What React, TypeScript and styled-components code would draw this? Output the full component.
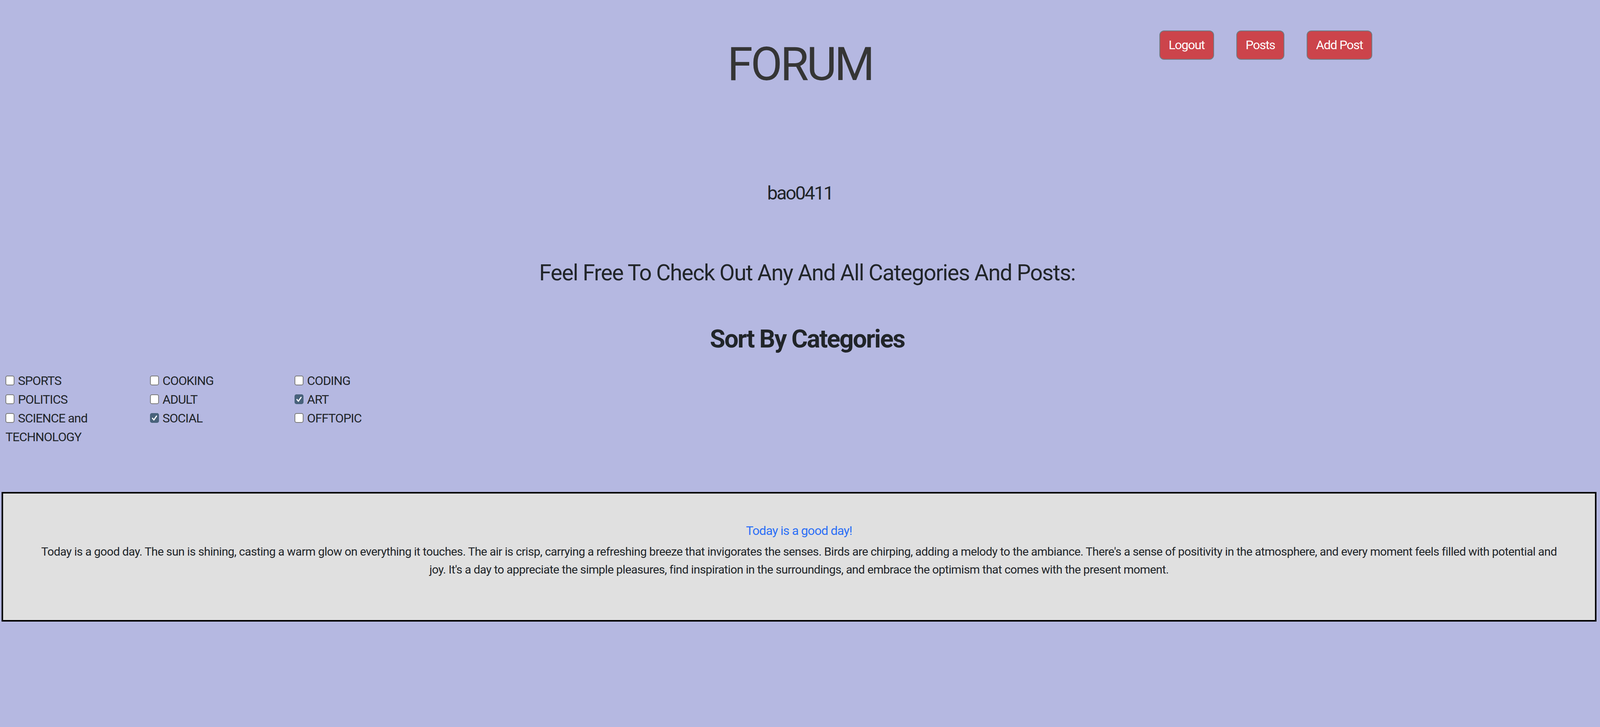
import React, { ReactElement } from 'react'
import styled, { createGlobalStyle } from 'styled-components'

const GlobalStyle = createGlobalStyle`
  html, body {
    margin: 0;
    padding: 0;
    background: #b5b8e1;
  }
  body {
    font-family: Roboto, "Liberation Sans", sans-serif;
    font-size: 32px;
    line-height: 48px;
    color: #212529;
  }
  * { box-sizing: border-box; }
`

interface Category {
  name: string
  checked?: boolean
}

const columns: Category[][] = [
  [{ name: 'SPORTS' }, { name: 'POLITICS' }, { name: 'SCIENCE and TECHNOLOGY' }],
  [{ name: 'COOKING' }, { name: 'ADULT' }, { name: 'SOCIAL', checked: true }],
  [{ name: 'CODING' }, { name: 'ART', checked: true }, { name: 'OFFTOPIC' }],
]

const postText =
  "Today is a good day. The sun is shining, casting a warm glow on everything it touches. The air is crisp, carrying a refreshing breeze that invigorates the senses. Birds are chirping, adding a melody to the ambiance. There's a sense of positivity in the atmosphere, and every moment feels filled with potential and joy. It's a day to appreciate the simple pleasures, find inspiration in the surroundings, and embrace the optimism that comes with the present moment."

function CheckMark(): ReactElement {
  return (
    <svg viewBox="0 0 16 16" width="100%" height="100%" preserveAspectRatio="none">
      <path d="M3.6 8.6 L6.6 11.8 L12.4 4.4" fill="none" stroke="#fff" strokeWidth="2.4" strokeLinecap="round" strokeLinejoin="round" />
    </svg>
  )
}

function App(): ReactElement {
  return (
    <Page>
      <GlobalStyle />
      <Header>
        <span />
        <Title>FORUM</Title>
        <Nav>
          <NavButton>Logout</NavButton>
          <NavButton>Posts</NavButton>
          <NavButton>Add Post</NavButton>
        </Nav>
      </Header>

      <UserName>bao0411</UserName>
      <Intro>Feel Free To Check Out Any And All Categories And Posts:</Intro>
      <SortTitle>Sort By Categories</SortTitle>

      <CategoryGrid>
        {columns.map((col, i) => (
          <div key={i}>
            {col.map((c) => (
              <CategoryLabel key={c.name}>
                <Box checked={!!c.checked}>{c.checked && <CheckMark />}</Box>
                {c.name}
              </CategoryLabel>
            ))}
          </div>
        ))}
      </CategoryGrid>

      <PostCard>
        <PostTitle href="#">Today is a good day!</PostTitle>
        <PostBody>{postText}</PostBody>
      </PostCard>
    </Page>
  )
}

export default App

const Page = styled.div`
  padding-bottom: 20px;
`
const Header = styled.header`
  display: grid;
  grid-template-columns: 1fr auto 1fr;
  align-items: start;
`
const Title = styled.h1`
  margin: 94px 0 0;
  font-size: 118px;
  line-height: 142px;
  font-weight: 400;
  letter-spacing: -0.045em;
  color: #353535;
`
const Nav = styled.nav`
  display: flex;
  justify-content: flex-end;
  gap: 57px;
  padding: 78px 583px 0 0;
`
const NavButton = styled.button`
  font-family: inherit;
  font-size: 32px;
  line-height: 47px;
  padding: 12px 22px;
  color: #fff;
  background: #cc444b;
  border: 2px solid #6f7a82;
  border-radius: 12px;
  letter-spacing: -0.04em;
  cursor: pointer;
`
const UserName = styled.h4`
  margin: 230px 0 0;
  text-align: center;
  font-size: 48px;
  line-height: 58px;
  font-weight: 400;
  letter-spacing: -0.06em;
`
const Intro = styled.h3`
  margin: 141px 0 0;
  padding-left: 37px;
  text-align: center;
  font-size: 57px;
  line-height: 68px;
  font-weight: 400;
  letter-spacing: -0.028em;
`
const SortTitle = styled.h2`
  margin: 97px 0 0;
  padding-left: 37px;
  text-align: center;
  font-size: 64px;
  line-height: 77px;
  font-weight: 700;
  letter-spacing: -0.036em;
`
const CategoryGrid = styled.div`
  display: grid;
  grid-template-columns: repeat(3, 370px);
  margin-top: 44px;
  padding-left: 14px;
`
const CategoryLabel = styled.label`
  display: block;
  font-size: 32px;
  line-height: 48px;
  letter-spacing: -0.034em;
`
const Box = styled.span<{ checked: boolean }>`
  display: inline-block;
  width: 23px;
  height: 25px;
  margin-right: 9px;
  vertical-align: -1px;
  border-radius: 5px;
  border: 2px solid ${(p) => (p.checked ? '#48627b' : '#7a7a7a')};
  background: ${(p) => (p.checked ? '#48627b' : '#fff')};
  svg { display: block; }
`
const PostCard = styled.section`
  margin: 117px 9px 0 4px;
  padding: 71px 80px 106px;
  background: #e0e0e0;
  border: 4px solid #000;
  text-align: center;
`
const PostTitle = styled.a`
  display: block;
  margin-bottom: 7px;
  font-size: 32px;
  line-height: 48px;
  letter-spacing: -0.03em;
  color: #2b6ff6;
  text-decoration: none;
`
const PostBody = styled.div`
  font-size: 30px;
  line-height: 46px;
  letter-spacing: -0.021em;
  color: #212529;
`
